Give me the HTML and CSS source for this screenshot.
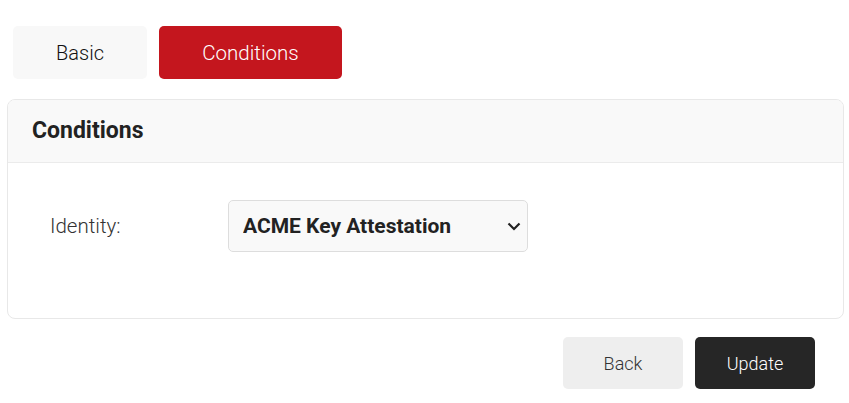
FILE: index.html
```html
<!DOCTYPE html>
<html lang="en">
<head>
    <meta charset="UTF-8">
    <meta name="viewport" content="width=device-width, initial-scale=1.0">
    <title>Conditions</title>
    <link rel="stylesheet" href="styles.css">
</head>
<body>
    <div class="page">
        <!-- Tabs -->
        <div class="tabs">
            <button class="tab">Basic</button>
            <button class="tab active">Conditions</button>
        </div>

        <div class="card">
            <div class="card-header">Conditions</div>
            <div class="card-body">
                <div class="form-row">
                    <label for="identity">Identity:</label>
                    <div class="select-wrap">
                        <select id="identity" name="identity">
                            <option>ACME Key Attestation</option>
                        </select>
                        <svg class="chevron" width="14" height="9" viewBox="0 0 14 9"><path d="M1.5 1.5 L7 7 L12.5 1.5" fill="none" stroke="#222" stroke-width="2.2"/></svg>
                    </div>
                </div>
            </div>
        </div>

        <div class="actions">
            <button class="btn btn-back">Back</button>
            <button class="btn btn-update">Update</button>
        </div>
    </div>
</body>
</html>
```

FILE: styles.css
```css
body {
    font-family: Roboto, "Liberation Sans", sans-serif;
    margin: 0;
    background-color: white;
    color: #222;
}
.page {
    padding: 26px 5px 0 7px;
}
.tabs {
    display: flex;
    gap: 12px;
    margin-left: 6px;
    margin-bottom: 20px;
}
.tab {
    font-family: inherit;
    font-size: 20px;
    font-weight: 300;
    height: 53px;
    border: none;
    border-radius: 5px;
    background-color: #f8f8f8;
    color: #111;
    width: 134px;
    cursor: pointer;
}
.tab.active {
    width: 183px;
    font-size: 20.5px;
    background-color: #c4161e;
    color: white;
}
.card {
    border: 1px solid #e8e8e8;
    border-radius: 8px;
    overflow: hidden;
}
.card-header {
    background-color: #f9f9f9;
    border-bottom: 1px solid #ebebeb;
    height: 62px;
    line-height: 62px;
    padding-left: 24px;
    font-size: 23px;
    font-weight: bold;
    color: #222;
}
.card-body {
    padding: 37px 42px 66px;
}
.form-row {
    display: flex;
    align-items: center;
}
.form-row label {
    width: 178px;
    font-size: 20.5px;
    font-weight: 300;
    color: #333;
}
.select-wrap {
    position: relative;
}
select {
    appearance: none;
    width: 300px;
    height: 52px;
    padding: 0 40px 0 14px;
    font-family: inherit;
    font-size: 21px;
    font-weight: bold;
    color: #222;
    background-color: #f9f9f9;
    border: 1px solid #ddd;
    border-radius: 5px;
}
.chevron {
    position: absolute;
    right: 7px;
    top: 22px;
    pointer-events: none;
}
.actions {
    display: flex;
    justify-content: flex-end;
    gap: 12px;
    margin: 18px 29px 0 0;
}
.btn {
    width: 120px;
    height: 52px;
    border: none;
    border-radius: 5px;
    font-family: inherit;
    font-size: 18px;
    font-weight: 300;
    cursor: pointer;
}
.btn-back {
    background-color: #eeeeee;
    color: #333;
}
.btn-update {
    background-color: #262626;
    color: white;
}
```
